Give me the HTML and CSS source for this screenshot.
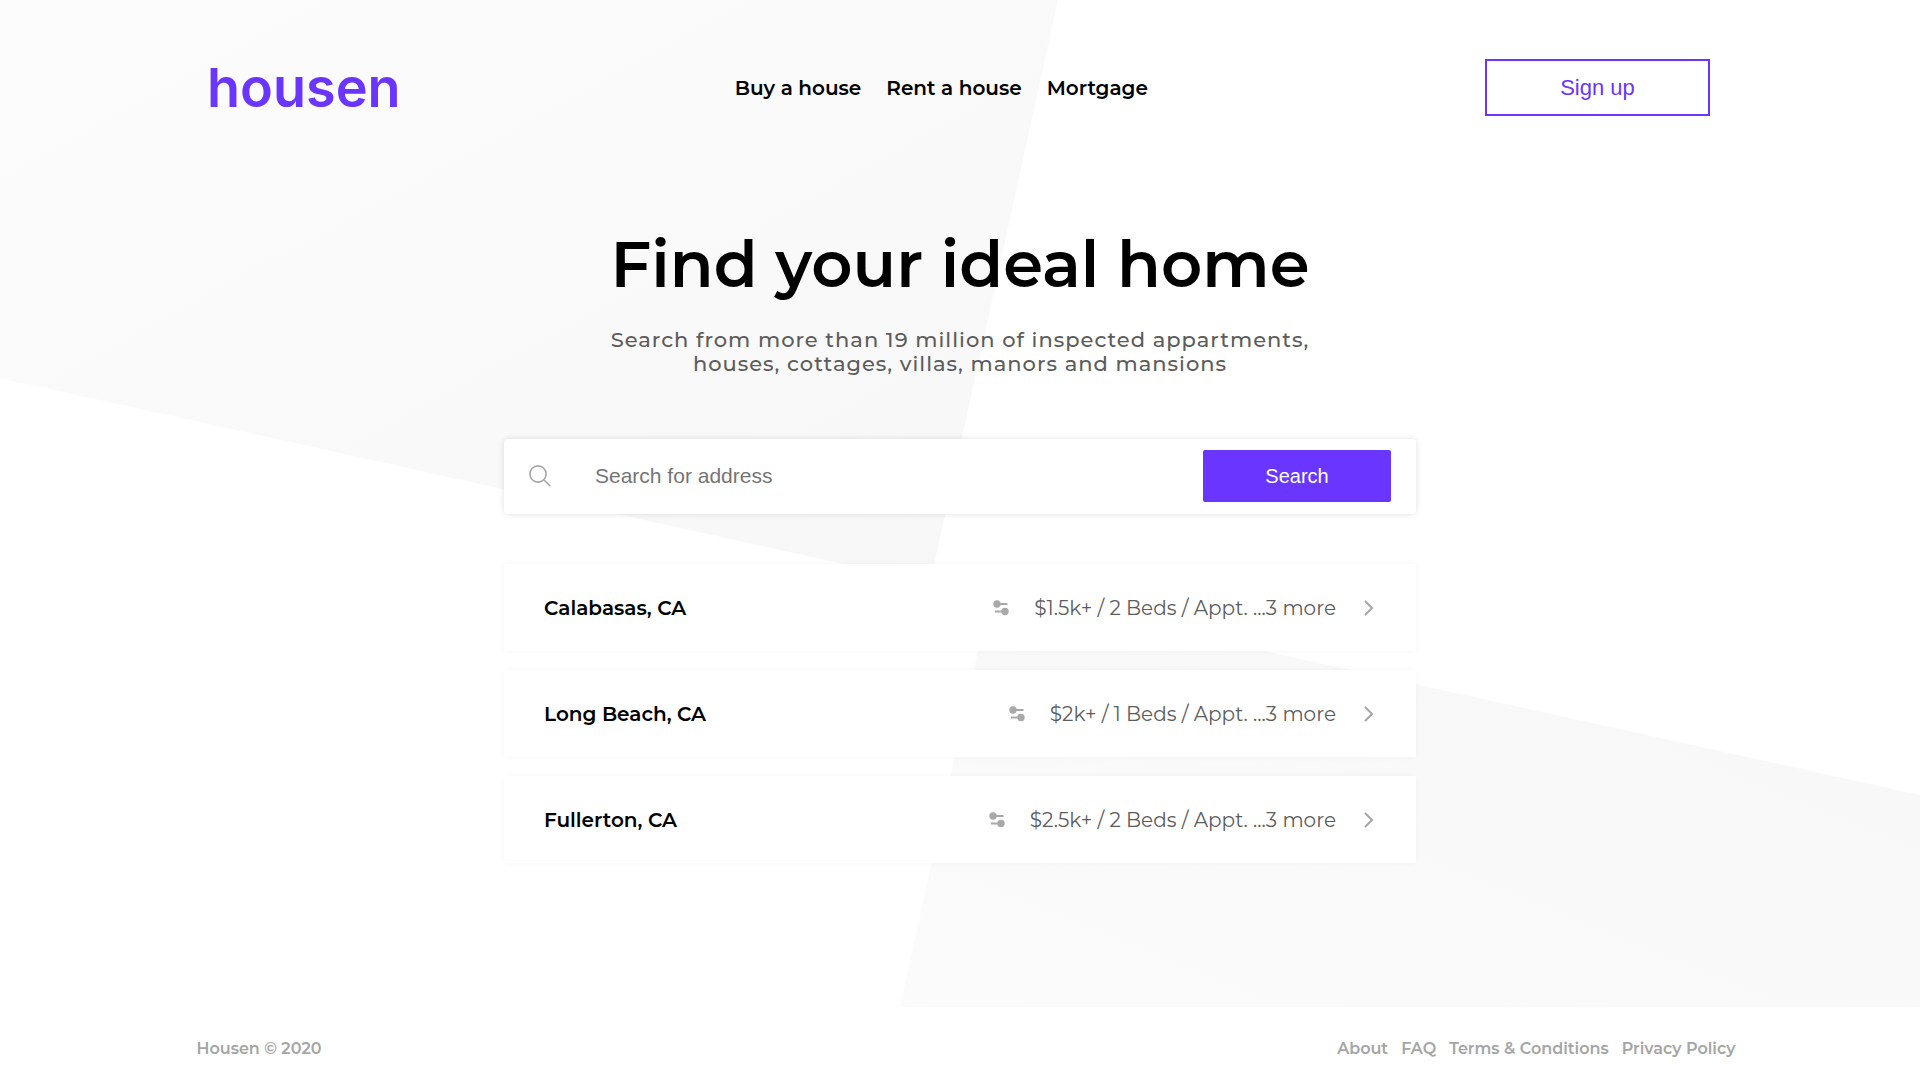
FILE: index.html
```html
<!DOCTYPE html>
<html lang="en">
<head>
<meta charset="utf-8">
<meta name="viewport" content="width=device-width, initial-scale=1">
<title>Housen</title>
<link rel="stylesheet" href="styles.css">
</head>
<body>
<div class="hero">
  <svg class="backdrop" viewBox="0 0 1920 1007" preserveAspectRatio="none" aria-hidden="true">
    <defs>
      <linearGradient id="shade-top" x1="0" y1="0" x2="1" y2="1">
        <stop offset="0" stop-color="#fcfcfc"/>
        <stop offset="1" stop-color="#f7f7f7"/>
      </linearGradient>
      <linearGradient id="shade-bottom" x1="0" y1="1" x2="1" y2="0">
        <stop offset="0" stop-color="#fbfbfb"/>
        <stop offset="1" stop-color="#f7f7f7"/>
      </linearGradient>
    </defs>
    <polygon points="0,0 1058,0 930,583 0,378" fill="url(#shade-top)"/>
    <polygon points="991,591 1920,795 1920,1007 900,1007" fill="url(#shade-bottom)"/>
  </svg>

  <header class="header">
    <a class="logo" href="#">housen</a>
    <nav class="nav" aria-label="Main">
      <a href="#">Buy a house</a>
      <a href="#">Rent a house</a>
      <a href="#">Mortgage</a>
    </nav>
    <button class="signup" type="button">Sign up</button>
  </header>

  <main class="main">
    <h1 class="title">Find your ideal home</h1>
    <p class="subtitle">Search from more than 19 million of inspected appartments,<br>houses, cottages, villas, manors and mansions</p>

    <form class="search" role="search">
      <label class="search-label" for="address" aria-label="Address">
        <svg width="22" height="22" viewBox="0 0 22 22" fill="none" stroke="#a5a5a5" stroke-width="1.6" aria-hidden="true">
          <circle cx="9" cy="9" r="8.1"/>
          <path d="M14.8 14.8L21.3 21.3"/>
        </svg>
      </label>
      <input class="search-input" id="address" type="text" placeholder="Search for address">
      <button class="search-button" type="submit">Search</button>
    </form>

    <ul class="results">
      <li>
        <a class="result" href="#">
          <span class="place">Calabasas, CA</span>
          <svg class="filters" viewBox="0 0 16 16" aria-hidden="true"><circle cx="4" cy="4" r="3.7"/><circle cx="12" cy="11.5" r="3.7"/><path d="M4 3h10.5v2H4zM2 10.5h10v2H2z"/></svg>
          <span class="details">$1.5k+ / 2 Beds / Appt. ...3 more</span>
          <svg class="chevron" viewBox="0 0 10 16" aria-hidden="true"><path d="M1 1l7 7-7 7"/></svg>
        </a>
      </li>
      <li>
        <a class="result" href="#">
          <span class="place">Long Beach, CA</span>
          <svg class="filters" viewBox="0 0 16 16" aria-hidden="true"><circle cx="4" cy="4" r="3.7"/><circle cx="12" cy="11.5" r="3.7"/><path d="M4 3h10.5v2H4zM2 10.5h10v2H2z"/></svg>
          <span class="details">$2k+ / 1 Beds / Appt. ...3 more</span>
          <svg class="chevron" viewBox="0 0 10 16" aria-hidden="true"><path d="M1 1l7 7-7 7"/></svg>
        </a>
      </li>
      <li>
        <a class="result" href="#">
          <span class="place">Fullerton, CA</span>
          <svg class="filters" viewBox="0 0 16 16" aria-hidden="true"><circle cx="4" cy="4" r="3.7"/><circle cx="12" cy="11.5" r="3.7"/><path d="M4 3h10.5v2H4zM2 10.5h10v2H2z"/></svg>
          <span class="details">$2.5k+ / 2 Beds / Appt. ...3 more</span>
          <svg class="chevron" viewBox="0 0 10 16" aria-hidden="true"><path d="M1 1l7 7-7 7"/></svg>
        </a>
      </li>
    </ul>
  </main>
</div>

<footer class="footer">
  <span>Housen © 2020</span>
  <nav class="footer-nav" aria-label="Footer">
    <a href="#">About</a>
    <a href="#">FAQ</a>
    <a href="#">Terms &amp; Conditions</a>
    <a href="#">Privacy Policy</a>
  </nav>
</footer>
</body>
</html>
```
FILE: styles.css
```css
* { box-sizing: border-box; }

body {
  margin: 0;
  min-height: 100vh;
  display: flex;
  flex-direction: column;
  background: #fff;
  color: #000;
  font-family: Montserrat, Inter, sans-serif;
  font-size: 20px;
  font-weight: 600;
}

a { color: inherit; text-decoration: none; }

button, input { font-family: Arial, "Liberation Sans", sans-serif; }

.hero {
  position: relative;
  flex: 1;
  padding: 0 24px 40px;
}

.backdrop {
  position: absolute;
  inset: 0;
  z-index: -1;
  width: 100%;
  height: 100%;
}

.header {
  max-width: 1500px;
  margin: 0 auto;
  padding-top: 59px;
  display: flex;
  align-items: center;
  justify-content: space-between;
}

.logo {
  margin: 0 -3px;
  color: #6935ff;
  font-family: Inter, sans-serif;
  font-size: 54px;
  line-height: 56px;
}

.nav { display: flex; gap: 25px; }

.signup {
  width: 225px;
  height: 57px;
  border: 2px solid #6935ff;
  background: transparent;
  color: #6935ff;
  font-size: 22px;
}

.main {
  max-width: 912px;
  margin: 0 auto;
  padding-top: 108px;
}

.title {
  margin: 0;
  font-size: 64px;
  font-weight: 600;
  line-height: 80px;
  text-align: center;
}

.subtitle {
  margin: 24px 0 0;
  color: #5c5c5c;
  font-size: 21px;
  font-weight: 500;
  line-height: 24px;
  letter-spacing: 1px;
  text-align: center;
}

.search {
  display: flex;
  align-items: center;
  height: 75px;
  margin-top: 63px;
  padding: 0 25px 1px;
  border-radius: 4px;
  background: #fff;
  box-shadow: 0 0 6px rgba(0, 0, 0, 0.12);
}

.search-label { display: flex; }

.search-input {
  flex: 1;
  min-width: 0;
  height: 52px;
  padding: 0 0 0 44px;
  border: 0;
  outline: 0;
  background: transparent;
  font-size: 21px;
}

.search-input::placeholder { color: #757575; }

.search-button {
  width: 188px;
  height: 52px;
  border: 0;
  border-radius: 2px;
  background: #6935ff;
  color: #fff;
  font-size: 20px;
}

.results {
  display: grid;
  gap: 19px;
  margin: 50px 0 0;
  padding: 0;
  list-style: none;
}

.result {
  display: flex;
  align-items: center;
  height: 87px;
  padding: 0 42px 0 40px;
  border-radius: 1px;
  background: #fff;
  box-shadow: 0 0 6px rgba(0, 0, 0, 0.04);
}

.place { flex: 1; }

.filters { width: 16px; height: 16px; fill: #a9a9a9; }

.details {
  margin: 0 28px 0 25px;
  color: #5c5c5c;
  font-weight: 400;
}

.chevron {
  width: 10px;
  height: 16px;
  fill: none;
  stroke: #a5a5a5;
  stroke-width: 2;
}

.footer {
  width: 100%;
  max-width: 1587px;
  height: 81px;
  margin: 0 auto;
  padding: 2px 18px 0 30px;
  display: flex;
  align-items: center;
  justify-content: space-between;
  color: #a5a5a5;
  font-size: 16px;
}

.footer-nav { display: flex; gap: 13px; }
```
